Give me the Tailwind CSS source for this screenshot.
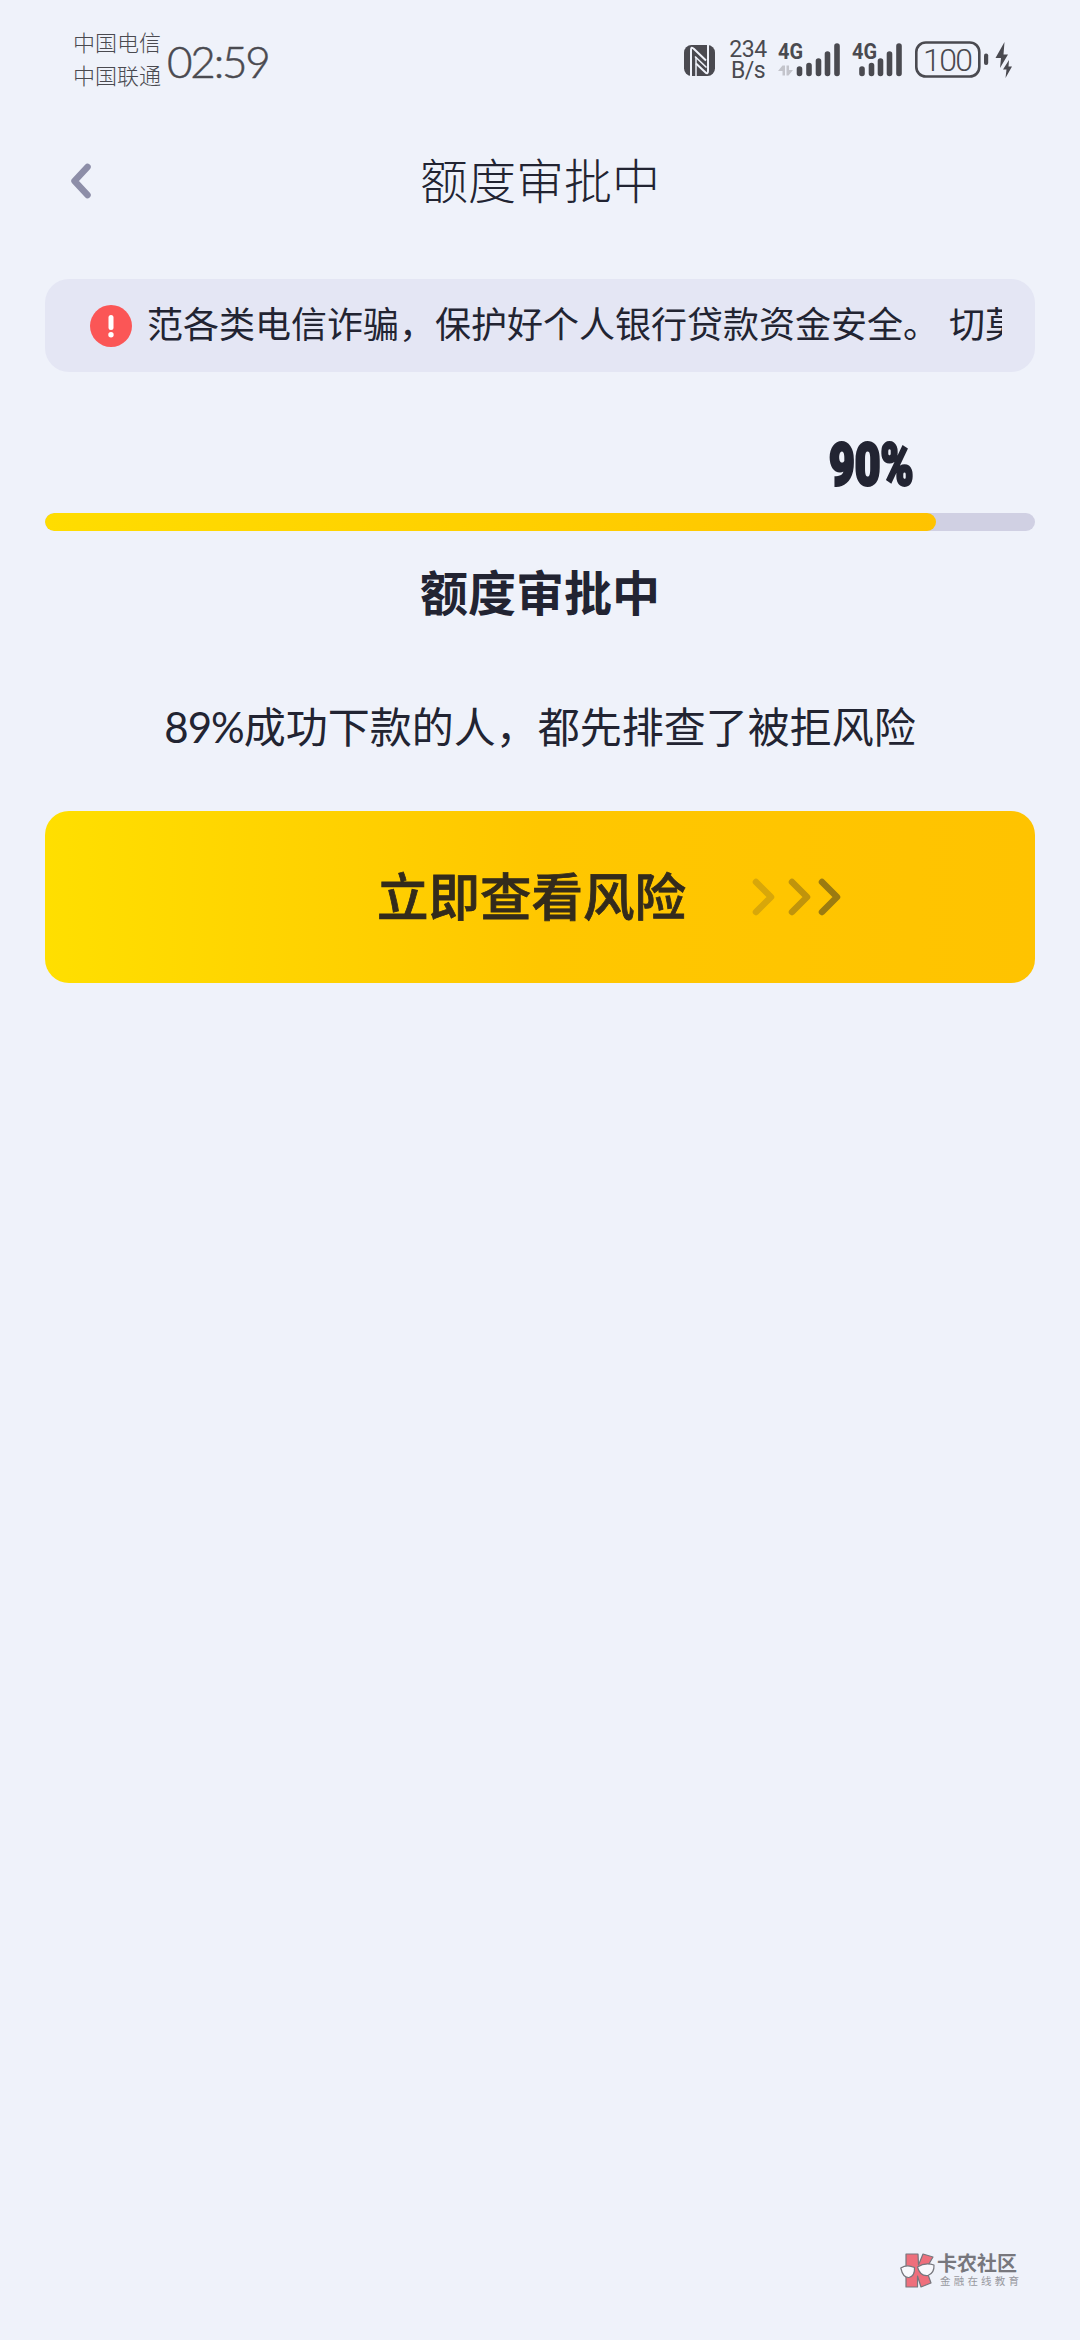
<!DOCTYPE html>
<html lang="zh-CN">
<head>
<meta charset="utf-8">
<title>额度审批中</title>
<script src="https://cdn.jsdelivr.net/npm/@tailwindcss/browser@4"></script>
</head>
<body class="bg-[#eff2fa]">
<div class="flex h-[2340px] w-[1080px] flex-col overflow-hidden bg-[#eff2fa] font-['Noto_Sans_CJK_SC',sans-serif] text-[#222432]">

  <!-- Status bar -->
  <header class="flex h-[120px] items-start pl-[73px] text-[#4a4a50]">
    <div class="flex w-[88px] flex-col pt-[25px] text-[22px] leading-[33px] font-light">
      <span>中国电信</span>
      <span>中国联通</span>
    </div>
    <div class="mt-[33px] ml-[6px] w-[105px] font-['Lato',sans-serif] text-[44px] leading-[56px] font-light tracking-[-2.200px] whitespace-nowrap [-webkit-text-stroke:0.5px_#4a4a50]">02:59</div>
    <!-- NFC -->
    <svg class="mt-[45px] ml-[412px] h-[31px] w-[31px] shrink-0" viewBox="0 0 31 31">
      <rect width="31" height="31" rx="7.500" fill="#4a4a50"/>
      <path d="M7 31V5Q7 1 10 4L22 15.500" fill="none" stroke="#eff2fa" stroke-width="2"/>
      <path d="M24 0V26Q24 30 21 27L12 18.500" fill="none" stroke="#eff2fa" stroke-width="2"/>
      <path d="M11 11.500L22.500 22.500" stroke="#eff2fa" stroke-width="1.600"/>
      <path d="M12 12V31" stroke="#eff2fa" stroke-width="1.500"/>
    </svg>
    <div class="mt-[39px] ml-[12px] flex w-[42px] flex-col items-center font-['Roboto',sans-serif] text-[23px] leading-[21px] tracking-[-0.5px]">
      <span>234</span><span>B/s</span>
    </div>
    <!-- Signal, first SIM -->
    <svg class="mt-[40px] ml-[9px] h-[40px] w-[66px] shrink-0" viewBox="0 0 66 40">
      <text x="0" y="18.500" textLength="25" lengthAdjust="spacingAndGlyphs" font-family="Roboto" font-weight="700" font-size="22" fill="#4a4a50">4G</text>
      <path d="M0 31L4.500 25.500H7V35.500H4.500V31ZM8.500 25.500H11V30H15L10.500 35.500H8.500Z" fill="#c3c4cb"/>
      <g stroke="#4a4a50" stroke-width="5.600" stroke-linecap="round"><path d="M21.500 29V33.500M31 25.500V33.500M40.500 21V33.500M49.500 14V33.500M59 6V33.500"/></g>
    </svg>
    <!-- Signal, second SIM -->
    <svg class="mt-[40px] ml-[7px] h-[40px] w-[54px] shrink-0" viewBox="0 0 54 40">
      <g stroke="#4a4a50" stroke-width="5.600" stroke-linecap="round"><path d="M11 29V33.500M20.500 25.500V33.500M29.500 21V33.500M38.500 14V33.500M48 6V33.500"/></g>
      <text x="1" y="18.500" textLength="25" lengthAdjust="spacingAndGlyphs" font-family="Roboto" font-weight="700" font-size="22" fill="#4a4a50" stroke="#eff2fa" stroke-width="2.500" paint-order="stroke">4G</text>
    </svg>
    <!-- Battery -->
    <svg class="mt-[40px] ml-[9px] h-[40px] w-[100px] shrink-0" viewBox="0 0 100 40">
      <rect x="2.300" y="2.500" width="63" height="34" rx="9.500" fill="none" stroke="#4a4a50" stroke-width="2.600"/>
      <rect x="70" y="13.500" width="4.200" height="11.500" rx="2" fill="#4a4a50"/>
      <text x="9" y="31" textLength="50" font-family="Roboto" font-weight="300" font-size="32" fill="#4a4a50">100</text>
      <path d="M90.500 2L81.500 18H87L86 28L94 14.500H89.500ZM95 20L89 29.500H92.500L91.500 38L98 26.500H94.500Z" fill="#4a4a50"/>
    </svg>
  </header>

  <!-- Title bar -->
  <nav class="grid h-[122px] grid-cols-[1fr_auto_1fr] items-center">
    <svg class="ml-[68px] h-[38px] w-[26px]" viewBox="0 0 26 38"><path d="M19.500 5L6.500 19L19.500 33" fill="none" stroke="#8d8ea8" stroke-width="6.500" stroke-linecap="round" stroke-linejoin="round"/></svg>
    <h1 class="mb-[6px] text-[48px] leading-[70px] font-light">额度审批中</h1>
  </nav>

  <main class="flex flex-col px-[45px] pt-[37px]">
    <!-- Notice -->
    <div class="flex h-[93px] items-center rounded-[24px] bg-[#e4e6f4] pr-[33px] pl-[45px]">
      <svg class="h-[42px] w-[42px] shrink-0" viewBox="0 0 42 42"><circle cx="21" cy="21" r="21" fill="#fb5656"/><path d="M21 12.500V22.500" stroke="#fff" stroke-width="5" stroke-linecap="round"/><circle cx="21" cy="29.800" r="2.700" fill="#fff"/></svg>
      <p class="mb-[8px] ml-[15px] flex-1 overflow-hidden text-[36px] leading-[54px] [word-spacing:2px] whitespace-nowrap">范各类电信诈骗，保护好个人银行贷款资金安全。 切莫</p>
    </div>

    <!-- Progress -->
    <div class="mt-[58px] flex h-[70px] items-center pl-[784px]">
      <span class="origin-left scale-x-[0.74] font-['Roboto',sans-serif] text-[60px] leading-[70px] font-black [-webkit-text-stroke:3px_#222432]">90%</span>
    </div>
    <div class="mt-[13px] h-[18px] overflow-hidden rounded-full bg-[#d0d0e3]">
      <div class="h-full rounded-full bg-linear-to-r from-[#ffdd00] to-[#ffc300]" style="width:90%"></div>
    </div>
    <h2 class="mt-[24px] text-center text-[48px] leading-[70px] font-bold">额度审批中</h2>

    <p class="mt-[70px] flex items-baseline justify-center text-[42px] leading-[60px] whitespace-nowrap"><span class="font-['Lato',sans-serif] tracking-[-1px]">89%</span><span>成功下款的人，都先排查了被拒风险</span></p>

    <button class="mt-[54px] flex h-[172px] items-center rounded-[24px] bg-linear-to-r from-[#ffdf00] via-[#ffc700] via-50% to-[#ffc300] pl-[332px] text-[#332b1c]">
      <span class="mb-[6px] text-[51.5px] leading-[76px] font-medium [-webkit-text-stroke:0.8px_#332b1c]">立即查看风险</span>
      <svg class="ml-[64px] h-[40px] w-[96px]" viewBox="0 0 96 40" fill="none" stroke-width="6.500" stroke-linecap="round" stroke-linejoin="round">
        <path d="M6 5L21 20L6 35" stroke="#d8a70a"/>
        <path d="M42 5L57 20L42 35" stroke="#c0940c"/>
        <path d="M72 5L87 20L72 35" stroke="#9c7b10"/>
      </svg>
    </button>
  </main>

  <!-- Community watermark -->
  <footer class="mt-auto mb-[50px] ml-[900px] flex items-start">
    <svg class="mt-px h-[38px] w-[36px]" viewBox="0 0 36 38" stroke="#77777e" stroke-width="1.200" stroke-linejoin="round">
      <path d="M6 2H18L18.500 13L23 2L33 5L26 17L31 31L21 35L17.500 24V35H6Z" fill="#ee6f7c"/>
      <path d="M0.800 16Q7 12 14.500 15.500Q15 24 9 25.500Q3 26 0.800 16ZM17.500 15Q25 10 34 13Q34.500 21 28 23.500Q20 24.500 17.500 15Z" fill="#f8f9fd"/>
    </svg>
    <div class="ml-[1px] flex flex-col whitespace-nowrap">
      <span class="text-[20px] leading-[24px] font-bold text-[#77777d]">卡农社区</span>
      <span class="ml-[3px] text-[10.500px] leading-[12px] tracking-[3.200px] text-[#98999f]">金融在线教育</span>
    </div>
  </footer>
</div>
</body>
</html>
